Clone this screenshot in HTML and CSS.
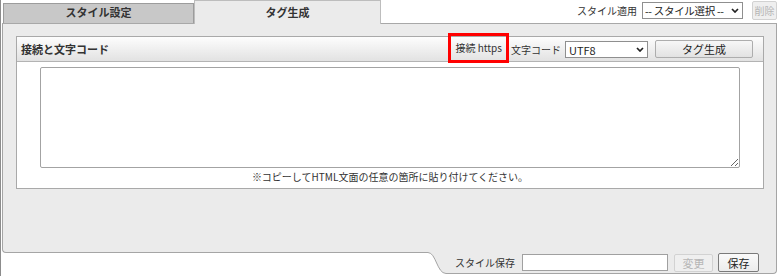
FILE: index.html
```html
<!DOCTYPE html>
<html lang="ja">
<head>
  <meta charset="UTF-8" />
  <title>タグ生成</title>
  <link rel="stylesheet" href="styles.css">
</head>
<body>
  <div class="frame">
    <div class="top">
      <div class="tab">スタイル設定</div>
      <div class="tab active">タグ生成</div>
      <div class="apply">
        <label for="styleSel">スタイル適用</label>
        <span class="sel sel-style">
          <select id="styleSel"><option>-- スタイル選択 --</option></select>
          <svg class="chev" width="8" height="5" viewBox="0 0 8 5"><path d="M1 1 L4 4 L7 1" fill="none" stroke="#222" stroke-width="1.7"/></svg>
        </span>
        <button type="button" class="btn btn-del" disabled>削除</button>
      </div>
    </div>

    <div class="panel">
      <div class="box">
        <div class="box-head">
          <span class="box-title">接続と文字コード</span>
          <span class="proto">接続 https</span>
          <span class="lbl">文字コード</span>
          <span class="sel sel-code">
            <select id="codeSel"><option>UTF8</option><option>Shift_JIS</option><option>EUC-JP</option></select>
            <svg class="chev" width="8" height="5" viewBox="0 0 8 5"><path d="M1 1 L4 4 L7 1" fill="none" stroke="#222" stroke-width="1.7"/></svg>
          </span>
          <button type="button" class="btn btn-gen">タグ生成</button>
        </div>
        <div class="box-body">
          <textarea id="tagOut"></textarea>
          <p class="note">※コピーしてHTML文面の任意の箇所に貼り付けてください。</p>
        </div>
      </div>
    </div>

    <div class="foot">
      <div class="foot-left"></div>
      <svg class="foot-curve" width="18" height="26" viewBox="0 0 18 26">
        <path d="M0 0 H18 V25.5 C9 25.5 8 4.5 0 4.5 Z" fill="#ebebeb"/>
        <path d="M0 4.5 C8 4.5 9 25.5 18 25.5" fill="none" stroke="#a5a5a5" stroke-width="1"/>
      </svg>
      <div class="foot-main">
        <label for="styleName">スタイル保存</label>
        <input type="text" id="styleName">
        <button type="button" class="btn btn-chg" disabled>変更</button>
        <button type="button" class="btn btn-save">保存</button>
      </div>
    </div>
  </div>
</body>
</html>
```

FILE: styles.css
```css
body {
  margin: 0;
  background: #fff;
  font-family: "Noto Sans CJK JP", "Noto Sans", sans-serif;
  font-size: 10px;
  color: #333;
}
.frame {
  width: 780px;
  height: 276px;
  box-sizing: border-box;
  border-left: 1px solid #8c8c8c;
}
.top {
  display: flex;
  align-items: flex-end;
  height: 23px;
  width: 775px;
  margin-left: 1px;
  border-bottom: 1px solid #a8a8a8;
}
.tab {
  box-sizing: border-box;
  width: 191px;
  height: 20px;
  margin-left: 1px;
  border: 1px solid #9c9c9c;
  border-bottom: 0;
  background: #c8c8c8;
  font-weight: bold;
  font-size: 11px;
  line-height: 17px;
  text-align: center;
  color: #333;
}
.tab.active {
  width: 187px;
  height: 24px;
  margin: 0 0 -1px 0;
  background: #ebebeb;
  border-color: #bdbdbd;
  line-height: 22px;
}
.apply {
  margin-left: auto;
  align-self: flex-start;
  display: flex;
  align-items: center;
  padding-top: 1px;
}
.sel {
  position: relative;
  display: inline-block;
}
.sel select {
  appearance: none;
  -webkit-appearance: none;
  display: block;
  box-sizing: border-box;
  height: 17px;
  padding: 0 0 0 3px;
  border: 1px solid #8f8f8f;
  border-radius: 0;
  background: #fff;
  font-family: inherit;
  font-size: 11px;
  color: #222;
}
.chev {
  position: absolute;
  right: 4px;
  top: 6px;
  pointer-events: none;
}
.sel-style {
  margin-left: 5px;
}
.sel-style select {
  width: 101px;
  padding-left: 2px;
  font-size: 10.5px;
  letter-spacing: -0.3px;
}
.btn {
  box-sizing: border-box;
  padding: 0;
  border: 1px solid #adadad;
  border-radius: 2px;
  background: linear-gradient(#f7f7f7, #e2e2e2);
  font-family: inherit;
  font-size: 11px;
  color: #222;
  cursor: pointer;
}
.btn:disabled {
  background: #efefef;
  border-color: #d2d2d2;
  color: #b5b5b5;
  cursor: default;
}
.btn-del {
  width: 25px;
  height: 19px;
  margin-left: 9px;
  font-size: 10px;
}
.panel {
  box-sizing: border-box;
  width: 775px;
  height: 224px;
  margin-left: 1px;
  padding: 12px 12px 0 13px;
  border-left: 1px solid #a5a5a5;
  border-right: 1px solid #a5a5a5;
  background: #ebebeb;
}
.box {
  background: #fff;
  border: 1px solid #a9a9a9;
}
.box-head {
  display: flex;
  align-items: center;
  height: 24px;
  padding: 0 10px 0 4px;
  background: linear-gradient(#fdfdfd, #e2e2e2);
  border-bottom: 1px solid #b3b3b3;
}
.box-title {
  font-weight: bold;
  font-size: 11px;
  color: #333;
  margin-right: auto;
}
.proto {
  align-self: flex-start;
  height: 24px;
  margin-top: -1px;
  padding: 0 4px;
  line-height: 24px;
  outline: 3px solid #f00;
  font-size: 10px;
}
.lbl {
  margin-left: 5px;
  font-size: 10px;
}
.sel-code {
  margin-left: 4px;
}
.sel-code select {
  width: 83px;
}
.btn-gen {
  width: 98px;
  height: 18px;
  margin-left: 7px;
}
.box-body {
  height: 126px;
  padding-top: 5px;
  box-sizing: border-box;
}
.box-body textarea {
  display: block;
  box-sizing: border-box;
  width: 700px;
  height: 101px;
  margin-left: 23px;
  border: 1px solid #a3a3a3;
  border-radius: 2px;
}
.note {
  margin: 2px 0 0;
  font-size: 10px;
  line-height: 14px;
  text-align: center;
  color: #333;
}
.foot {
  display: flex;
  width: 775px;
  height: 26px;
  margin-left: 1px;
}
.foot-left {
  box-sizing: border-box;
  width: 426px;
  height: 5px;
  border-left: 1px solid #a5a5a5;
  border-bottom: 1px solid #a5a5a5;
  border-bottom-left-radius: 4px;
  background: #ebebeb;
}
.foot-curve {
  display: block;
  flex: none;
}
.foot-main {
  flex: 1;
  box-sizing: border-box;
  display: flex;
  align-items: center;
  justify-content: flex-end;
  padding: 4px 17px 0 0;
  background: #ebebeb;
  border-right: 1px solid #a5a5a5;
  border-bottom: 1px solid #a5a5a5;
  border-bottom-right-radius: 4px;
}
.foot-main input {
  box-sizing: border-box;
  width: 146px;
  height: 17px;
  margin-left: 7px;
  border: 1px solid #a0a0a0;
}
.btn-chg {
  width: 39px;
  height: 18px;
  margin-left: 6px;
}
.btn-save {
  width: 41px;
  height: 19px;
  margin-left: 5px;
  border-color: #7a7a7a;
  background: linear-gradient(#fafafa, #ececec);
}
```
